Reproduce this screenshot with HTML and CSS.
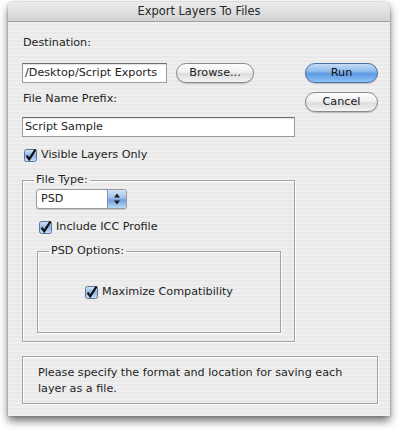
FILE: index.html
```html
<!DOCTYPE html>
<html>
<head>
<meta charset="utf-8">
<link rel="stylesheet" href="styles.css">
</head>
<body>
<div class="window">
  <div class="titlebar">Export Layers To Files</div>
  <div class="content">
    <div class="top">
      <div class="left">
        <div class="label">Destination:</div>
        <div class="dest-row">
          <div class="field dest">/Desktop/Script Exports</div>
          <div class="btn browse">Browse...</div>
        </div>
        <div class="label prefix-label">File Name Prefix:</div>
        <div class="field prefix">Script Sample</div>
        <div class="check-row visible">
          <svg class="cb" width="13" height="13" viewBox="0 0 13 13"><use href="#cbox"/></svg>
          <span>Visible Layers Only</span>
        </div>
        <fieldset class="group filetype">
          <legend>File Type:</legend>
          <div class="popup">
            <span class="popup-text">PSD</span>
            <span class="popup-arrows">
              <svg width="18" height="18" viewBox="0 0 18 18"><path d="M6 7.5 L9 3.5 L12 7.5 Z M6 10.5 L9 14.5 L12 10.5 Z" fill="#1a1a1a"/></svg>
            </span>
          </div>
          <div class="check-row icc">
            <svg class="cb" width="13" height="13" viewBox="0 0 13 13"><use href="#cbox"/></svg>
            <span>Include ICC Profile</span>
          </div>
          <fieldset class="group psd">
            <legend>PSD Options:</legend>
            <div class="check-row maxc">
              <svg class="cb" width="13" height="13" viewBox="0 0 13 13"><use href="#cbox"/></svg>
              <span>Maximize Compatibility</span>
            </div>
          </fieldset>
        </fieldset>
      </div>
      <div class="right">
        <div class="btn run">Run</div>
        <div class="btn cancel">Cancel</div>
      </div>
    </div>
    <div class="message">Please specify the format and location for saving each layer as a file.</div>
  </div>
</div>
<svg width="0" height="0" class="defs">
  <defs>
    <linearGradient id="cbg" x1="0" y1="0" x2="0" y2="1">
      <stop offset="0" stop-color="#d6e6f8"/>
      <stop offset="0.5" stop-color="#8fb6e6"/>
      <stop offset="1" stop-color="#c9e0fa"/>
    </linearGradient>
    <g id="cbox">
      <rect x="0.5" y="0.5" width="12" height="12" rx="2" fill="url(#cbg)" stroke="#5d7696"/>
      <path d="M2.6 6.6 L5.2 10.2 L11.6 0.4" fill="none" stroke="#111" stroke-width="2.2" stroke-linejoin="miter"/>
    </g>
  </defs>
</svg>
</body>
</html>
```

FILE: styles.css
```css
html, body {
  margin: 0;
  padding: 0;
  background: #ffffff;
}
body {
  width: 400px;
  height: 433px;
  overflow: hidden;
  font-family: "DejaVu Sans", "Liberation Sans", sans-serif;
  font-size: 11.2px;
  color: #1e1e1e;
}
.defs { position: absolute; }
.window {
  margin: 2px 0 0 8px;
  width: 382px;
  height: 414px;
  border-radius: 5px 5px 0 0;
  background: repeating-linear-gradient(180deg, #efefef 0 2px, #e9e9e9 2px 4px);
  box-shadow: 0 5px 9px rgba(0,0,0,0.55), 0 0 2px rgba(0,0,0,0.35);
  overflow: hidden;
}
.titlebar {
  height: 19px;
  line-height: 19px;
  text-align: center;
  font-size: 11.4px;
  color: #262626;
  background: linear-gradient(180deg, #ececec, #d3d3d3);
  border-bottom: 1px solid #a0a0a0;
}
.content {
  padding: 13px 12px 0 14px;
}
.top {
  display: flex;
}
.left {
  width: 273px;
}
.label {
  height: 16px;
  line-height: 16px;
  padding-left: 1px;
}
.dest-row {
  display: flex;
  align-items: center;
  gap: 9px;
  margin-top: 12px;
}
.field {
  background: #fff;
  border: 1px solid #9a9a9a;
  border-top-color: #6e6e6e;
  box-shadow: inset 0 1px 1px rgba(0,0,0,0.12);
  height: 18px;
  line-height: 18px;
  padding-left: 2px;
  box-sizing: content-box;
  white-space: nowrap;
  overflow: hidden;
}
.dest {
  width: 141px;
}
.btn {
  height: 18px;
  line-height: 18px;
  border: 1px solid #8a8a8a;
  border-radius: 10px;
  text-align: center;
  background: linear-gradient(180deg, #fdfdfd 0%, #f0f0f0 45%, #dcdcdc 55%, #f4f4f4 100%);
  box-shadow: 0 1px 1px rgba(0,0,0,0.2);
  color: #1a1a1a;
}
.browse {
  width: 76px;
}
.prefix-label {
  margin-top: 8px;
}
.prefix {
  margin-top: 10px;
  width: 269px;
}
.check-row {
  display: flex;
  align-items: center;
  height: 16px;
  line-height: 16px;
}
.check-row .cb {
  margin-right: 4px;
  flex: none;
}
.visible {
  margin-top: 10px;
  padding-left: 2px;
}
.group {
  margin: 0;
  border: 1px solid #a3a3a3;
  box-shadow: inset 1px 1px 0 rgba(255,255,255,0.8), 1px 1px 0 rgba(255,255,255,0.8);
  padding: 0 0 0 13px;
  min-width: 0;
}
.group legend {
  margin-left: -2px;
  padding: 0 2px;
  height: 16px;
  line-height: 16px;
}
.filetype {
  margin-top: 9px;
  width: 258px;
  padding-bottom: 8px;
}
.popup {
  margin-top: 1px;
  width: 89px;
  height: 18px;
  display: flex;
  border: 1px solid #9a9a9a;
  border-radius: 3px;
  background: #fff;
  box-shadow: 0 1px 1px rgba(0,0,0,0.15);
  overflow: hidden;
}
.popup-text {
  flex: 1;
  line-height: 18px;
  padding-left: 4px;
}
.popup-arrows {
  width: 18px;
  border-left: 1px solid #7d93b3;
  background: linear-gradient(180deg, #d3e4f8 0%, #9ec0ea 45%, #6f9fdc 55%, #bcd8f8 100%);
  display: flex;
}
.icc {
  margin-top: 10px;
  padding-left: 3px;
}
.psd {
  margin-top: 8px;
  margin-left: 1px;
  width: 229px;
  padding-bottom: 32px;
}
.maxc {
  margin-top: 25px;
  justify-content: center;
  margin-left: -13px;
}
.right {
  margin-left: auto;
  padding-top: 28px;
  display: flex;
  flex-direction: column;
  gap: 9px;
}
.right .btn {
  width: 71px;
}
.run {
  border-color: #4a6ea5;
  background: linear-gradient(180deg, #c6dcf6 0%, #90bbed 40%, #5d98e2 55%, #8fc4f8 100%);
  color: #111;
}
.message {
  margin-top: 14px;
  border: 1px solid #a3a3a3;
  box-shadow: inset 1px 1px 0 rgba(255,255,255,0.8), 1px 1px 0 rgba(255,255,255,0.8);
  padding: 8px 20px 6px 15px;
  line-height: 16px;
  height: 32px;
}
```
